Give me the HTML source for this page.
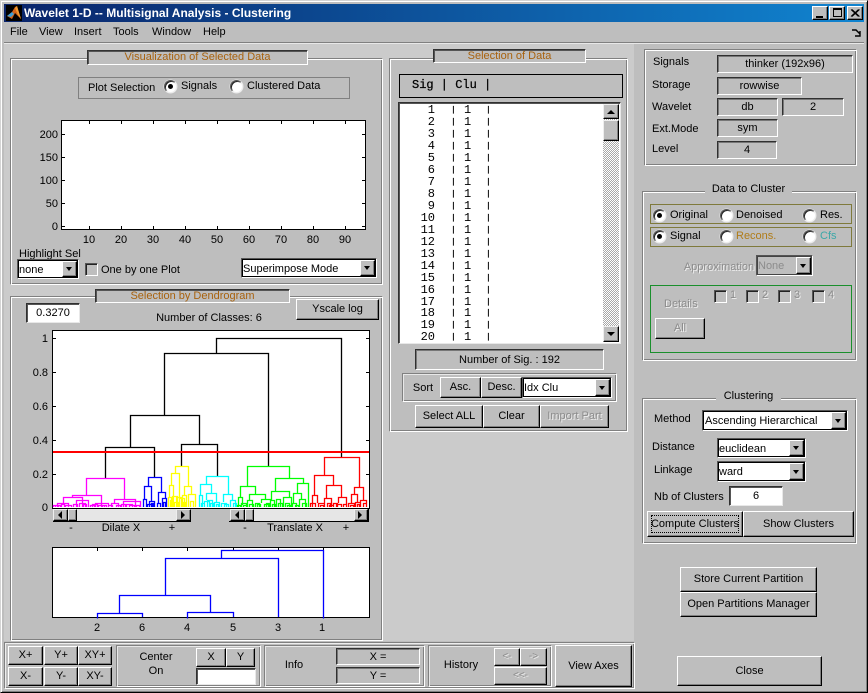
<!DOCTYPE html>
<html><head><meta charset="utf-8"><title>Wavelet 1-D -- Multisignal Analysis - Clustering</title>
<style>
html,body{margin:0;padding:0}
#w{position:relative;width:868px;height:693px;overflow:hidden;background:#bebebe;font:11px "Liberation Sans",sans-serif;color:#000}
#w div,#w span{position:absolute;box-sizing:border-box}
.t{white-space:nowrap;line-height:13px;margin-top:1px}
.c{transform:translateX(-50%)}
.r{transform:translateX(-100%)}
.pn{background:#bebebe;border:1px solid;border-color:#808080 #fff #fff #808080;box-shadow:inset 1px 1px #fff,inset -1px -1px #808080}
.bx{border:1px solid;border-color:#808080 #fff #fff #808080;box-shadow:inset 1px 1px #e8e8e8,inset -1px -1px #808080;background:#bebebe}
.lg{background:#bebebe;border:1px solid;border-color:#333 #fff #fff #333;box-shadow:inset 1px 1px #555;text-align:center;color:#a8620e;line-height:13px;white-space:nowrap}
.b{background:#bebebe;border:1px solid;border-color:#fff #000 #000 #fff;box-shadow:inset -1px -1px #808080;display:flex;align-items:center;justify-content:center;white-space:nowrap;padding-bottom:1px}
.dis{color:#8c8c8c;text-shadow:1px 1px #eee}
.s{background:#bebebe;border:1px solid;border-color:#303030 #fff #fff #303030;box-shadow:inset 1px 1px #777;display:flex;align-items:center;justify-content:center;white-space:nowrap}
.e{background:#fff;border:1px solid;border-color:#303030 #e8e8e8 #e8e8e8 #303030;box-shadow:inset 1px 1px #555;display:flex;align-items:center;justify-content:center}
.p{background:#fff;border:1px solid;border-color:#555 #fff #fff #555;box-shadow:inset 1px 1px #000,inset -1px -1px #000;line-height:20px;padding-left:1px;white-space:nowrap}
.a{background:#bebebe;right:1px;top:1px;bottom:1px;width:15px;border:1px solid;border-color:#fff #000 #000 #fff;box-shadow:inset -1px -1px #808080}
.a:after{content:"";position:absolute;left:3px;top:calc(50% - 2px);border:3px solid transparent;border-top:4px solid #000;border-bottom:0}
.rd{width:13px;height:13px;border-radius:50%;background:#fff;border:1px solid;border-color:#555 #eee #eee #555;box-shadow:inset 1px 1px #222,0 0 0 .5px #e8e8e8}
.rd.on:after{content:"";position:absolute;left:3px;top:3px;width:5px;height:5px;border-radius:50%;background:#000}
.ck{width:13px;height:13px;border:1px solid;border-color:#555 #fff #fff #555;box-shadow:inset 1px 1px #222}
.sb{background:#bebebe;border:1px solid;border-color:#eee #000 #000 #eee;box-shadow:inset -1px -1px #808080}
.ol{border:1px solid #7f7a3c}
.m{font-family:"Liberation Mono",monospace;font-size:12px;line-height:12px;white-space:pre;margin:0}
.h{-webkit-text-stroke:.25px #000}
.v{font-family:"Liberation Mono",monospace;font-size:8px;line-height:11.97px;white-space:pre;-webkit-text-stroke:.35px #000;margin:0}
svg{position:absolute;left:0;top:0}
</style></head><body><div id="w">

<!-- window frame -->
<div style="left:0;top:0;width:868px;height:693px;border:1px solid;border-color:#d4d4d4 #000 #000 #d4d4d4;box-shadow:inset 1px 1px #fff,inset -1px -1px #808080"></div>
<div style="left:4px;top:4px;width:860px;height:18px;background:linear-gradient(90deg,#0a246a 0%,#1084d0 100%)"></div>
<div class="t" style="left:24px;top:5px;color:#fff;font-weight:bold;font-size:12px;line-height:14px">Wavelet 1-D -- Multisignal Analysis - Clustering</div>
<svg width="868" height="693" style="z-index:1">
<rect x="6" y="5" width="16" height="16" fill="#000"/>
<path d="M7 16L12 12L15 7L17 6L21 19L18 16L15 13L12 19Z" fill="#d4641c"/>
<path d="M7 16L12 12L14 14L11 17Z" fill="#3d9fd8"/>
<path d="M15 8L17 6L21 19L18 15Z" fill="#f09a30"/>
</svg>
<div class="b" style="left:812px;top:6px;width:16px;height:14px;border-color:#fff #000 #000 #fff"><div style="left:3px;top:9px;width:7px;height:2px;background:#000"></div></div>
<div class="b" style="left:829px;top:6px;width:16px;height:14px"><div style="left:3px;top:1px;width:9px;height:9px;border:1px solid #000;border-top-width:2px"></div></div>
<div class="b" style="left:847px;top:6px;width:16px;height:14px"><svg width="14" height="12"><path d="M3 2.500L10.500 9.500M4 2.500L11.500 9.500M10.500 2.500L3 9.500M11.500 2.500L4 9.500" stroke="#000"/></svg></div>

<!-- menu -->
<div class="t" style="left:10px;top:25px">File</div>
<div class="t" style="left:39px;top:25px">View</div>
<div class="t" style="left:74px;top:25px">Insert</div>
<div class="t" style="left:113px;top:25px">Tools</div>
<div class="t" style="left:152px;top:25px">Window</div>
<div class="t" style="left:203px;top:25px">Help</div>
<svg width="868" height="693"><path d="M852 30h4l4 4M860 31v5h-5" fill="none" stroke="#000" stroke-width="1.4"/></svg>
<div style="left:4px;top:42px;width:860px;height:1px;background:#808080"></div>
<div style="left:4px;top:43px;width:860px;height:1px;background:#e8e8e8"></div>

<!-- left light area -->
<div style="left:4px;top:44px;width:630px;height:597px;background:#cbcbcb"></div>

<!-- Panel 1 -->
<div class="pn" style="left:10px;top:58px;height:227px;width:373px"></div>
<div class="lg" style="left:87px;top:50px;width:221px;height:15px">Visualization of Selected Data</div>
<div style="left:78px;top:77px;width:272px;height:22px;border:1px solid #808080"></div>
<div class="t" style="left:88px;top:81px">Plot Selection</div>
<div class="rd on" style="left:164px;top:80px"></div>
<div class="t" style="left:181px;top:79px">Signals</div>
<div class="rd" style="left:230px;top:80px"></div>
<div class="t" style="left:247px;top:79px">Clustered Data</div>

<div style="left:61px;top:120px;width:305px;height:110px;background:#fff;border:1px solid #000"></div>
<svg width="868" height="693"><path d="M89.500 229v-3M121.500 229v-3M153.500 229v-3M185.500 229v-3M217.500 229v-3M249.500 229v-3M281.500 229v-3M313.500 229v-3M345.500 229v-3M89.500 121v3M121.500 121v3M153.500 121v3M185.500 121v3M217.500 121v3M249.500 121v3M281.500 121v3M313.500 121v3M345.500 121v3M62 134.500h3M62 157.500h3M62 180.500h3M62 203.500h3M62 226.500h3M365 134.500h-3M365 157.500h-3M365 180.500h-3M365 203.500h-3M365 226.500h-3" stroke="#000" fill="none"/></svg>
<div class="t r" style="left:58px;top:128px">200</div>
<div class="t r" style="left:58px;top:151px">150</div>
<div class="t r" style="left:58px;top:174px">100</div>
<div class="t r" style="left:58px;top:197px">50</div>
<div class="t r" style="left:58px;top:220px">0</div>
<div class="t c" style="left:89px;top:233px">10</div>
<div class="t c" style="left:121px;top:233px">20</div>
<div class="t c" style="left:153px;top:233px">30</div>
<div class="t c" style="left:185px;top:233px">40</div>
<div class="t c" style="left:217px;top:233px">50</div>
<div class="t c" style="left:249px;top:233px">60</div>
<div class="t c" style="left:281px;top:233px">70</div>
<div class="t c" style="left:313px;top:233px">80</div>
<div class="t c" style="left:345px;top:233px">90</div>
<div class="t" style="left:19px;top:247px">Highlight Sel</div>
<div class="p" style="left:17px;top:259px;width:62px;height:20px">none<div class="a"></div></div>
<div class="ck" style="left:85px;top:263px"></div>
<div class="t" style="left:101px;top:263px">One by one Plot</div>
<div class="p" style="left:241px;top:258px;width:136px;height:20px">Superimpose Mode<div class="a"></div></div>

<!-- Panel 2 -->
<div class="pn" style="left:10px;top:296px;width:373px;height:345px"></div>
<div class="lg" style="left:95px;top:289px;width:195px;height:14px;line-height:12px">Selection by Dendrogram</div>
<div class="e" style="left:26px;top:303px;width:54px;height:20px">0.3270</div>
<div class="t c" style="left:209px;top:311px">Number of Classes: 6</div>
<div class="b" style="left:296px;top:299px;width:83px;height:21px">Yscale log</div>

<div style="left:52px;top:330px;width:318px;height:179px;background:#fff;border:1px solid #000"></div>
<div class="t r" style="left:48px;top:332px">1</div>
<div class="t r" style="left:48px;top:366px">0.8</div>
<div class="t r" style="left:48px;top:400px">0.6</div>
<div class="t r" style="left:48px;top:434px">0.4</div>
<div class="t r" style="left:48px;top:468px">0.2</div>
<div class="t r" style="left:48px;top:501px">0</div>

<svg width="868" height="693">
<path d="M53 338.500h3M53 372.500h3M53 406.500h3M53 440.500h3M53 474.500h3M369 338.500h-3M369 372.500h-3M369 406.500h-3M369 440.500h-3M369 474.500h-3" stroke="#000"/>
<g fill="none" stroke-width="1.3">
<path stroke="#000" d="M216.500 353V338.500H341.500V458M164.500 415V353.500H268.500V466M130.500 447V415.500H199.500V444M105.500 478V447.500H154.500V477M181.500 466V444.500H217.500V476"/>
<path stroke="#f0f" d="M86.500 495V478.500H124.500V499M72.500 497V495.500H101.500V507M63.500 503V497.500H82.500V507M57.500 507V503.500H68.500V507M53.500 507V505.500H60.500V507M65.500 507V505.500H71.500V507M76.500 507V500.500H88.500V507M79.500 507V503.500H85.500V507M90.500 507V505.500H94.500V507M95.500 507V503.500H108.500V507M98.500 507V505.500H104.500V507M114.500 503V499.500H135.500V507M111.500 507V503.500H118.500V507M123.500 507V501.500H140.500V507M126.500 507V504.500H132.500V507M136.500 507V505.500H139.500V507M55.500 507V505.500H58.500V507M61.500 507V504.500H64.500V507M73.500 507V504.500H77.500V507M83.500 507V504.500H86.500V507M92.500 507V504.500H97.500V507M102.500 507V505.500H106.500V507M108.500 507V505.500H112.500V507M116.500 507V505.500H120.500V507M121.500 507V504.500H125.500V507M129.500 507V505.500H134.500V507"/>
<path stroke="#00f" d="M148.500 486V477.500H161.500V492M144.500 499V486.500H151.500V502M143.500 507V499.500H146.500V507M149.500 507V501.500H154.500V507M158.500 503V492.500H165.500V498M157.500 507V503.500H160.500V507M162.500 507V498.500H166.500V507M147.500 507V504.500H152.500V507M163.500 507V502.500H165.500V507M151.500 507V503.500H153.500V507"/>
<path stroke="#ff0" d="M175.500 473V466.500H188.500V486M171.500 485V473.500H179.500V497M169.500 497V485.500H173.500V507M184.500 495V486.500H191.500V494M168.500 507V497.500H171.500V507M172.500 507V496.500H177.500V507M176.500 507V497.500H181.500V507M179.500 507V498.500H184.500V507M182.500 507V495.500H186.500V507M188.500 507V494.500H195.500V507M190.500 507V501.500H193.500V507M170.500 507V500.500H173.500V507M174.500 507V502.500H178.500V507M183.500 507V502.500H185.500V507"/>
<path stroke="#0ff" d="M206.500 484V476.500H228.500V494M200.500 495V484.500H211.500V493M199.500 507V495.500H202.500V507M206.500 500V493.500H216.500V502M204.500 507V501.500H209.500V507M207.500 507V500.500H212.500V507M214.500 507V502.500H219.500V507M223.500 502V494.500H232.500V500M221.500 507V503.500H226.500V507M230.500 507V500.500H235.500V507M233.500 507V503.500H236.500V507M201.500 507V503.500H204.500V507M210.500 507V503.500H213.500V507M216.500 507V504.500H218.500V507M224.500 507V504.500H228.500V507"/>
<path stroke="#0f0" d="M247.500 486V466.500H289.500V478M240.500 497V486.500H255.500V494M238.500 507V497.500H242.500V505M237.500 507V505.500H240.500V507M241.500 507V503.500H246.500V507M249.500 500V494.500H265.500V499M247.500 507V500.500H252.500V507M255.500 507V503.500H259.500V507M261.500 503V499.500H270.500V507M264.500 507V504.500H268.500V507M275.500 491V478.500H303.500V483M271.500 500V491.500H289.500V497M270.500 507V500.500H274.500V507M276.500 507V499.500H280.500V507M283.500 507V497.500H291.500V507M285.500 507V503.500H289.500V507M297.500 493V483.500H308.500V507M293.500 503V493.500H301.500V499M292.500 507V503.500H296.500V507M299.500 507V499.500H305.500V507M302.500 507V503.500H306.500V507M243.500 507V505.500H246.500V507M249.500 507V504.500H253.500V507M257.500 507V504.500H260.500V507M266.500 507V503.500H269.500V507M272.500 507V504.500H275.500V507M278.500 507V503.500H282.500V507M287.500 507V505.500H290.500V507M295.500 507V505.500H298.500V507"/>
<path stroke="#f00" d="M324.500 475V457.500H359.500V487M314.500 495V475.500H333.500V485M312.500 507V495.500H317.500V503M310.500 507V503.500H315.500V507M318.500 507V503.500H324.500V507M326.500 498V485.500H341.500V497M324.500 507V498.500H331.500V507M327.500 507V503.500H330.500V507M333.500 507V503.500H337.500V507M338.500 503V497.500H346.500V507M336.500 507V504.500H341.500V507M354.500 494V487.500H363.500V500M351.500 503V494.500H357.500V503M348.500 507V503.500H354.500V507M355.500 507V502.500H360.500V507M360.500 507V500.500H366.500V507M363.500 507V503.500H366.500V507M320.500 507V505.500H323.500V507M329.500 507V505.500H333.500V507M343.500 507V504.500H346.500V507M350.500 507V505.500H353.500V507M357.500 507V504.500H359.500V507"/>
</g>
<rect x="53" y="451" width="316" height="2" fill="#f00"/>
</svg>

<!-- sliders -->
<div style="left:53px;top:509px;width:138px;height:13px;background:#bebebe;border-bottom:1px solid #000;border-right:1px solid #000"></div>
<div class="sb" style="left:53px;top:509px;width:15px;height:12px"></div>
<div class="sb" style="left:68px;top:509px;width:9px;height:12px"></div>
<div style="left:77px;top:509px;width:99px;height:12px;background:#e6e6e6"></div>
<div class="sb" style="left:176px;top:509px;width:15px;height:12px"></div>
<div style="left:229px;top:509px;width:140px;height:13px;background:#bebebe;border-bottom:1px solid #000;border-right:1px solid #000"></div>
<div class="sb" style="left:230px;top:509px;width:15px;height:12px"></div>
<div class="sb" style="left:245px;top:509px;width:9px;height:12px"></div>
<div style="left:254px;top:509px;width:100px;height:12px;background:#e6e6e6"></div>
<div class="sb" style="left:354px;top:509px;width:14px;height:12px"></div>
<svg width="868" height="693"><path d="M58 515l4-4v8zM185 515l-4-4v8zM235 515l4-4v8zM362 515l-4-4v8z" fill="#000"/></svg>
<div class="t c" style="left:71px;top:521px">-</div>
<div class="t c" style="left:121px;top:521px">Dilate X</div>
<div class="t c" style="left:172px;top:521px">+</div>
<div class="t c" style="left:245px;top:521px">-</div>
<div class="t c" style="left:295px;top:521px">Translate X</div>
<div class="t c" style="left:346px;top:521px">+</div>

<!-- lower axes -->
<div style="left:52px;top:547px;width:318px;height:71px;background:#fff;border:1px solid #000"></div>
<svg width="868" height="693"><path d="M97.500 548v3M142.500 548v3M187.500 548v3M233.500 548v3M278.500 548v3M323.500 548v3" stroke="#000"/>
<path d="M97.500 618.500V613.500H142.500V617M119.500 613V595.500H210.500V612M187.500 618.500V612.500H233.500V617M165.500 595V558.500H278.500V617M221.500 558V550.500H323.500V618.500" fill="none" stroke="#00f" stroke-width="1.3"/></svg>
<div class="t c" style="left:97px;top:621px">2</div>
<div class="t c" style="left:142px;top:621px">6</div>
<div class="t c" style="left:187px;top:621px">4</div>
<div class="t c" style="left:233px;top:621px">5</div>
<div class="t c" style="left:278px;top:621px">3</div>
<div class="t c" style="left:322px;top:621px">1</div>

<!-- Panel 3: selection of data -->
<div class="pn" style="left:389px;top:58px;width:239px;height:374px"></div>
<div class="lg" style="left:433px;top:49px;width:153px;height:14px;line-height:12px">Selection of Data</div>
<div style="left:399px;top:74px;width:224px;height:24px;border:1px solid #000"></div>
<div class="t m h" style="left:412px;top:79px">Sig | Clu |</div>
<div style="left:398px;top:102px;width:223px;height:242px;background:#fff;border:1px solid;border-color:#303030 #e8e8e8 #e8e8e8 #303030;box-shadow:inset 1px 1px #555;overflow:hidden"></div>
<div class="t m" style="left:399px;top:105px;width:36px;height:238px;overflow:hidden;text-align:right;line-height:11.97px">1
2
3
4
5
6
7
8
9
10
11
12
13
14
15
16
17
18
19
20</div>
<div class="t m" style="left:464px;top:105px;height:238px;overflow:hidden;line-height:11.97px">1
1
1
1
1
1
1
1
1
1
1
1
1
1
1
1
1
1
1
1</div>
<div class="t v" style="left:451px;top:105px;height:238px;overflow:hidden">|
|
|
|
|
|
|
|
|
|
|
|
|
|
|
|
|
|
|
|</div>
<div class="t v" style="left:486px;top:105px;height:238px;overflow:hidden">|
|
|
|
|
|
|
|
|
|
|
|
|
|
|
|
|
|
|
|</div>
<div style="left:603px;top:104px;width:16px;height:238px;background:#dcdcdc repeating-conic-gradient(#fff 0 25%,#a8a8a8 0 50%) 0 0/2px 2px"></div>
<div class="sb" style="left:603px;top:104px;width:16px;height:15px"></div>
<div class="sb" style="left:603px;top:120px;width:16px;height:21px"></div>
<div class="sb" style="left:603px;top:326px;width:16px;height:16px"></div>
<svg width="868" height="693"><path d="M607 114h8l-4-4zM607 332h8l-4 4z" fill="#000"/></svg>
<div class="s" style="left:415px;top:349px;width:189px;height:21px">Number of Sig. : 192</div>
<div class="bx" style="left:402px;top:373px;width:215px;height:29px"></div>
<div class="t c" style="left:423px;top:381px">Sort</div>
<div class="b" style="left:440px;top:377px;width:41px;height:21px">Asc.</div>
<div class="b" style="left:481px;top:377px;width:41px;height:21px">Desc.</div>
<div class="p" style="left:522px;top:377px;width:90px;height:21px">Idx Clu<div class="a"></div></div>
<div class="b" style="left:415px;top:405px;width:68px;height:23px">Select ALL</div>
<div class="b" style="left:483px;top:405px;width:57px;height:23px">Clear</div>
<div class="b dis" style="left:540px;top:405px;width:69px;height:23px">Import Part</div>

<!-- Bottom strip -->
<div style="left:4px;top:642px;width:631px;height:47px;background:#bebebe;border:1px solid;border-color:#808080 #fff #fff #808080;box-shadow:inset 1px 1px #eee,inset -1px -1px #808080"></div>
<div class="b" style="left:8px;top:646px;width:35px;height:19px">X+</div>
<div class="b" style="left:44px;top:646px;width:34px;height:19px">Y+</div>
<div class="b" style="left:78px;top:646px;width:34px;height:19px">XY+</div>
<div class="b" style="left:8px;top:667px;width:35px;height:19px">X-</div>
<div class="b" style="left:44px;top:667px;width:34px;height:19px">Y-</div>
<div class="b" style="left:78px;top:667px;width:34px;height:19px">XY-</div>
<div class="bx" style="left:116px;top:645px;width:145px;height:42px"></div>
<div class="t c" style="left:156px;top:650px">Center</div>
<div class="t c" style="left:156px;top:664px">On</div>
<div class="b" style="left:196px;top:648px;width:30px;height:19px">X</div>
<div class="b" style="left:226px;top:648px;width:29px;height:19px">Y</div>
<div class="e" style="left:196px;top:668px;width:60px;height:17px"></div>
<div class="bx" style="left:264px;top:645px;width:161px;height:42px"></div>
<div class="t c" style="left:294px;top:658px">Info</div>
<div class="s" style="left:336px;top:648px;width:84px;height:17px">X =</div>
<div class="s" style="left:336px;top:667px;width:84px;height:17px">Y =</div>
<div class="bx" style="left:428px;top:645px;width:124px;height:42px"></div>
<div class="t c" style="left:461px;top:658px">History</div>
<div class="b dis" style="left:494px;top:648px;width:26px;height:18px;font-size:10px">&lt;-</div>
<div class="b dis" style="left:520px;top:648px;width:27px;height:18px;font-size:10px">-&gt;</div>
<div class="b dis" style="left:494px;top:667px;width:53px;height:18px;font-size:10px">&lt;&lt;-</div>
<div class="b" style="left:555px;top:645px;width:77px;height:42px">View Axes</div>

<!-- Right: info panel -->
<div class="pn" style="left:644px;top:49px;width:213px;height:117px"></div>
<div class="t" style="left:653px;top:55px">Signals</div>
<div class="t" style="left:652px;top:78px">Storage</div>
<div class="t" style="left:652px;top:100px">Wavelet</div>
<div class="t" style="left:652px;top:122px">Ext.Mode</div>
<div class="t" style="left:652px;top:142px">Level</div>
<div class="s" style="left:717px;top:55px;width:136px;height:18px">thinker (192x96)</div>
<div class="s" style="left:717px;top:77px;width:85px;height:18px">rowwise</div>
<div class="s" style="left:717px;top:98px;width:61px;height:18px">db</div>
<div class="s" style="left:782px;top:98px;width:62px;height:18px">2</div>
<div class="s" style="left:717px;top:119px;width:61px;height:18px">sym</div>
<div class="s" style="left:717px;top:141px;width:60px;height:18px">4</div>

<!-- Data to Cluster -->
<div class="pn" style="left:642px;top:191px;width:215px;height:170px"></div>
<div class="t" style="left:705px;top:182px;width:87px;background:#bebebe;text-align:center">Data to Cluster</div>
<div class="ol" style="left:650px;top:204px;width:202px;height:20px"></div>
<div class="ol" style="left:650px;top:227px;width:202px;height:20px"></div>
<div class="rd on" style="left:653px;top:209px"></div>
<div class="t" style="left:670px;top:208px">Original</div>
<div class="rd" style="left:720px;top:209px"></div>
<div class="t" style="left:736px;top:208px">Denoised</div>
<div class="rd" style="left:803px;top:209px"></div>
<div class="t" style="left:820px;top:208px">Res.</div>
<div class="rd on" style="left:653px;top:230px"></div>
<div class="t" style="left:670px;top:229px">Signal</div>
<div class="rd" style="left:720px;top:230px"></div>
<div class="t" style="left:736px;top:229px;color:#b07c18">Recons.</div>
<div class="rd" style="left:803px;top:230px"></div>
<div class="t" style="left:820px;top:229px;color:#3ca8a8">Cfs</div>
<div class="t c dis" style="left:719px;top:260px">Approximation</div>
<div class="p dis" style="left:756px;top:255px;width:57px;height:21px;border-color:#555 #fff #fff #555;box-shadow:inset 1px 1px #444,inset -1px -1px #444;background:#bebebe;text-shadow:none">None<div class="a"></div></div>
<div style="left:650px;top:285px;width:202px;height:68px;border:1px solid #1a8f2c"></div>
<div class="t dis" style="left:664px;top:297px">Details</div>
<div class="ck" style="left:714px;top:290px"></div><div class="t dis" style="left:730px;top:288px">1</div>
<div class="ck" style="left:746px;top:290px"></div><div class="t dis" style="left:762px;top:288px">2</div>
<div class="ck" style="left:778px;top:290px"></div><div class="t dis" style="left:794px;top:288px">3</div>
<div class="ck" style="left:812px;top:290px"></div><div class="t dis" style="left:828px;top:288px">4</div>
<div class="b dis" style="left:655px;top:318px;width:50px;height:21px">All</div>

<!-- Clustering -->
<div class="pn" style="left:642px;top:398px;width:215px;height:146px"></div>
<div class="t" style="left:716px;top:389px;width:65px;background:#bebebe;text-align:center">Clustering</div>
<div class="t" style="left:654px;top:412px">Method</div>
<div class="p" style="left:702px;top:410px;width:146px;height:21px;padding-left:2px">Ascending Hierarchical<div class="a"></div></div>
<div class="t" style="left:652px;top:440px">Distance</div>
<div class="p" style="left:717px;top:438px;width:89px;height:20px">euclidean<div class="a"></div></div>
<div class="t" style="left:654px;top:463px">Linkage</div>
<div class="p" style="left:717px;top:461px;width:89px;height:21px">ward<div class="a"></div></div>
<div class="t" style="left:654px;top:490px">Nb of Clusters</div>
<div class="e" style="left:729px;top:486px;width:54px;height:20px">6</div>
<div class="b" style="left:647px;top:511px;width:96px;height:26px">Compute Clusters<div style="left:3px;top:3px;right:3px;bottom:3px;border:1px dotted #000"></div></div>
<div class="b" style="left:743px;top:511px;width:111px;height:26px">Show Clusters</div>

<div class="b" style="left:680px;top:567px;width:137px;height:25px">Store Current Partition</div>
<div class="b" style="left:680px;top:592px;width:137px;height:25px">Open Partitions Manager</div>
<div class="b" style="left:677px;top:656px;width:145px;height:30px">Close</div>

</div></body></html>
